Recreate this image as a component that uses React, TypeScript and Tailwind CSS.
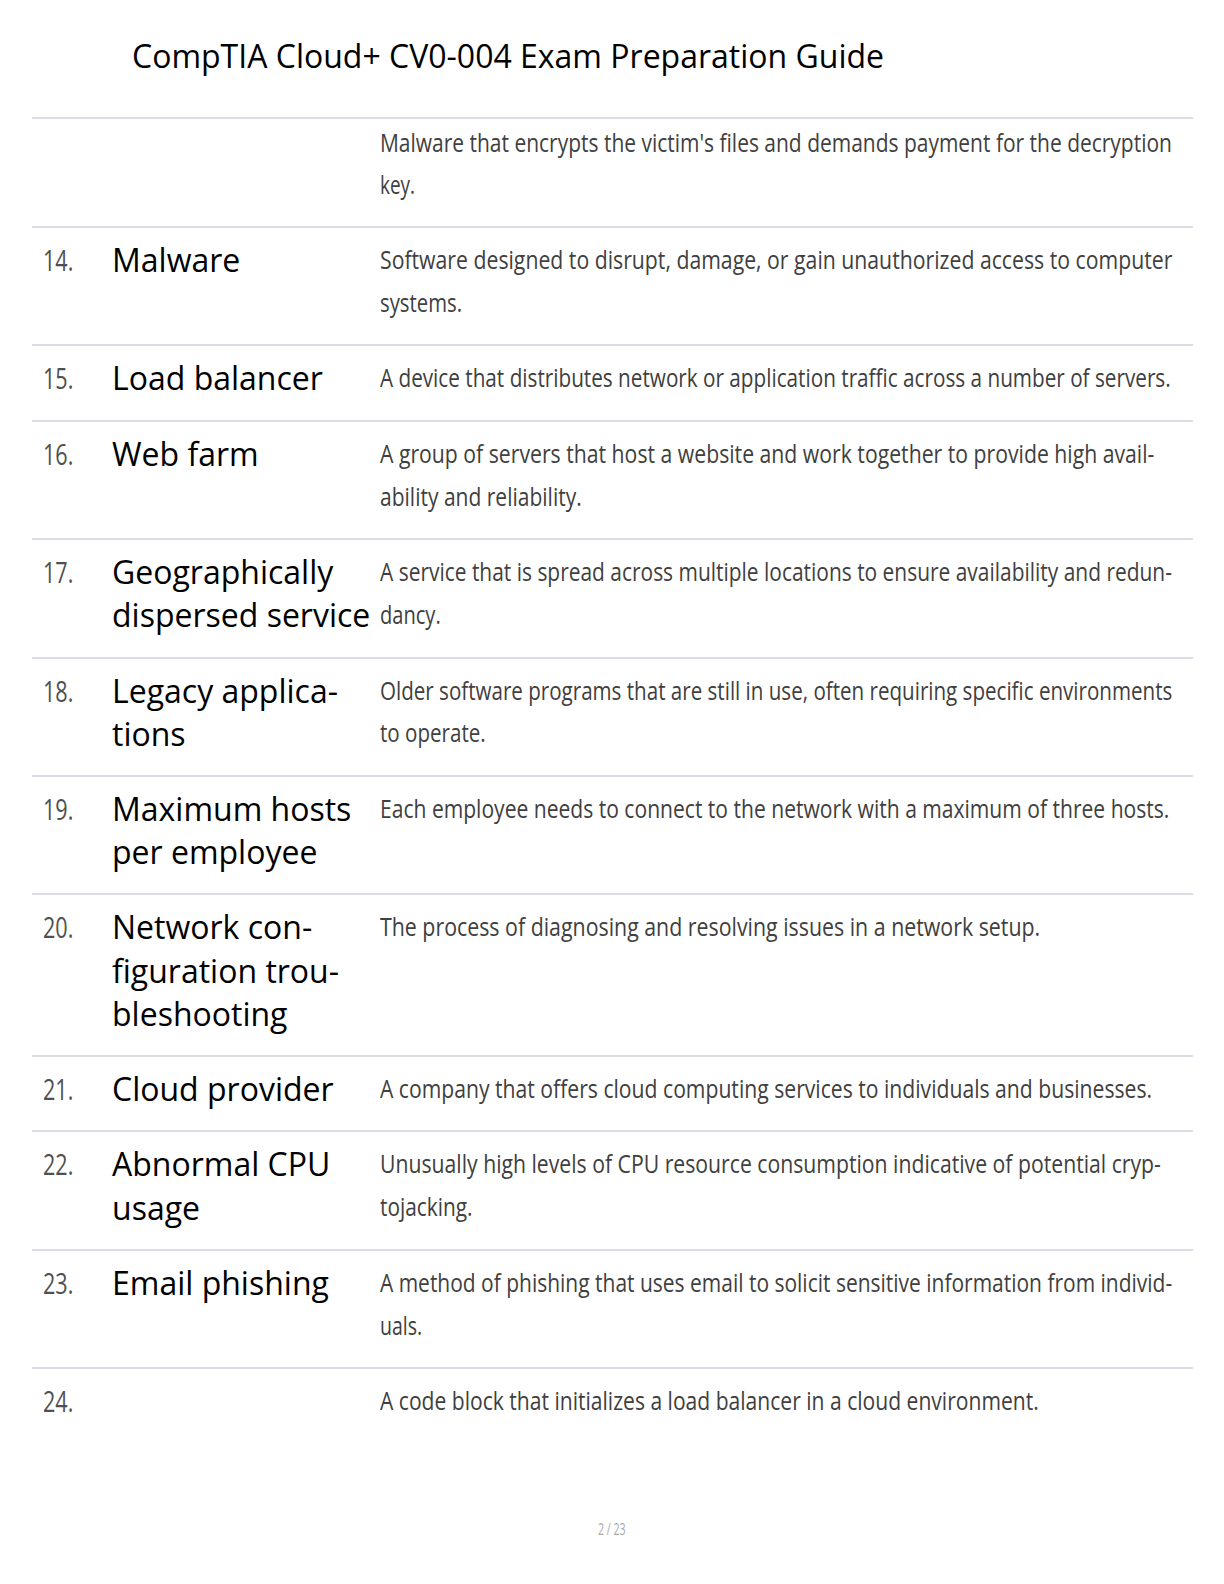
import React, { useLayoutEffect, useRef, useState } from "react"

// each definition is kept in the lines the printed page uses; the number is
// where that line ends on the page, measured from the column's left edge
type Line = [string, number]
type Row = { n: string; term: string; def: Line[]; first?: boolean }

const rows: Row[] = [
  {
    n: "",
    term: "",
    first: true,
    def: [
      ["Malware that encrypts the victim's files and demands payment for the decryption", 792],
      ["key.", 35],
    ],
  },
  {
    n: "14.",
    term: "Malware",
    def: [
      ["Software designed to disrupt, damage, or gain unauthorized access to computer", 792],
      ["systems.", 82],
    ],
  },
  {
    n: "15.",
    term: "Load balancer",
    def: [["A device that distributes network or application traffic across a number of servers.", 791]],
  },
  {
    n: "16.",
    term: "Web farm",
    def: [
      ["A group of servers that host a website and work together to provide high avail-", 774],
      ["ability and reliability.", 202],
    ],
  },
  {
    n: "17.",
    term: "Geographically dispersed service",
    def: [
      ["A service that is spread across multiple locations to ensure availability and redun-", 792],
      ["dancy.", 61],
    ],
  },
  {
    n: "18.",
    term: "Legacy applica\u00ADtions",
    def: [
      ["Older software programs that are still in use, often requiring specific environments", 792],
      ["to operate.", 106],
    ],
  },
  {
    n: "19.",
    term: "Maximum hosts per employee",
    def: [["Each employee needs to connect to the network with a maximum of three hosts.", 789]],
  },
  {
    n: "20.",
    term: "Network con\u00ADfiguration trou\u00ADbleshooting",
    def: [["The process of diagnosing and resolving issues in a network setup.", 660]],
  },
  {
    n: "21.",
    term: "Cloud provider",
    def: [["A company that offers cloud computing services to individuals and businesses.", 772]],
  },
  {
    n: "22.",
    term: "Abnormal CPU usage",
    def: [
      ["Unusually high levels of CPU resource consumption indicative of potential cryp-", 781],
      ["tojacking.", 93],
    ],
  },
  {
    n: "23.",
    term: "Email phishing",
    def: [
      ["A method of phishing that uses email to solicit sensitive information from individ-", 792],
      ["uals.", 42],
    ],
  },
  {
    n: "24.",
    term: "",
    def: [["A code block that initializes a load balancer in a cloud environment.", 659]],
  },
]

// squeezes one printed line to the width it has on the page
function FitLine({ text, width }: { text: string; width: number }) {
  const ref = useRef<HTMLSpanElement>(null)
  const [sx, setSx] = useState(0.82)

  useLayoutEffect(() => {
    const el = ref.current
    if (!el) return
    const fit = () => {
      if (el.offsetWidth > 0) setSx(width / el.offsetWidth)
    }
    fit()
    document.fonts?.ready.then(fit)
  }, [width])

  return (
    <div className="h-[42.8px] whitespace-nowrap overflow-hidden">
      <span
        ref={ref}
        className="inline-block origin-left"
        style={{ transform: `scaleX(${sx})` }}
      >
        {text}
      </span>
    </div>
  )
}

export default function App() {
  return (
    <div className="w-[1224px] h-[1584px] bg-white flex flex-col overflow-hidden [font-family:'Open_Sans','Noto_Sans',sans-serif]">
      <h1 className="pl-[132px] pt-[34px] text-[32px] leading-[43.5px] font-normal text-black">
        CompTIA Cloud+ CV0-004 Exam Preparation Guide
      </h1>

      <div className="ml-[32px] w-[1161px] mt-[39px]">
        {rows.map((r, i) => (
          <div
            key={i}
            className="grid grid-cols-[80px_268px_minmax(0,1fr)] border-t-2 border-[#dcdce4]"
          >
            {/* number */}
            <div
              className={`pl-[11px] ${r.first ? "pt-[2px]" : "pt-[10px]"} pb-[20px] text-[30px] leading-[43.2px] text-[#505050]`}
            >
              <span className="inline-block origin-left scale-x-[0.72]">{r.n}</span>
            </div>

            {/* term */}
            <div
              className={`pr-[6px] ${r.first ? "pt-[2px]" : "pt-[10px]"} pb-[20px] text-[32px] leading-[43.2px] text-black`}
            >
              {r.term}
            </div>

            {/* definition */}
            <div
              className={`${r.first ? "pt-[2px] pb-[20px]" : "pt-[10px] pb-[20.7px]"} text-[26px] leading-[42.8px] text-[#404040] overflow-hidden`}
            >
              {r.def.map(([t, w], j) => (
                <FitLine key={j} text={t} width={w} />
              ))}
            </div>
          </div>
        ))}
      </div>

      <div className="mt-auto pb-[45px] text-center text-[16px] leading-[20px] text-[#a8a8a8]">
        <span className="inline-block scale-x-[0.66]">2 / 23</span>
      </div>
    </div>
  )
}
